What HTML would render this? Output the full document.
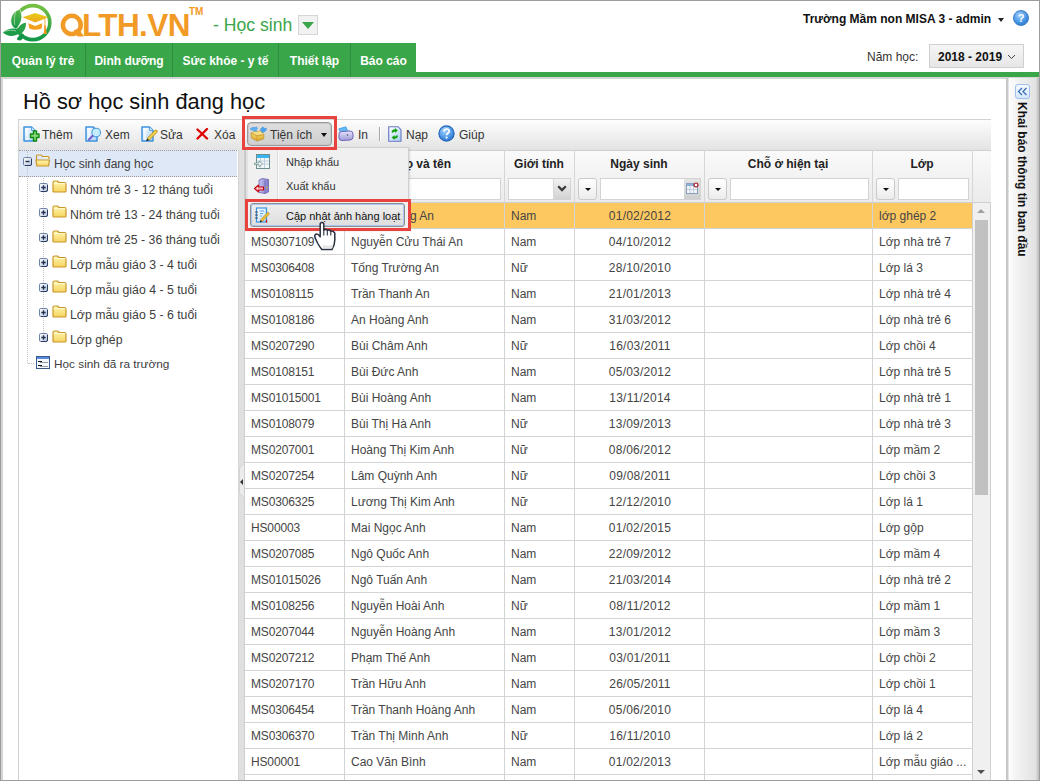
<!DOCTYPE html>
<html><head><meta charset="utf-8">
<style>
*{box-sizing:border-box;margin:0;padding:0}
html,body{width:1040px;height:781px;overflow:hidden;background:#fff}
body{position:relative;font-family:"Liberation Sans",sans-serif;color:#222}
.a{position:absolute;white-space:nowrap}
#frame{position:absolute;left:0;top:0;width:1040px;height:781px;border:1px solid #9c9c9c;z-index:50;pointer-events:none}
/* header */
#logo-t{left:82px;top:7px;font-size:31.5px;font-weight:bold;color:#f29a26;line-height:36px;letter-spacing:-0.6px}
#tm{left:189px;top:7px;font-size:10px;font-weight:bold;color:#f29a26;line-height:10px}
#mod{left:213px;top:13px;font-size:17.6px;color:#3aa64a;line-height:24px}
#moddd{left:298px;top:15px;width:20px;height:20px;border:1px solid #d6d6d6;background:#f2f2f2}
#moddd:after{content:"";position:absolute;left:3px;top:6px;border-left:6px solid transparent;border-right:6px solid transparent;border-top:7px solid #3aa64a}
#user{left:803px;top:11px;font-size:12px;font-weight:bold;color:#111;line-height:16px}
#usertri{left:998px;top:18px;border-left:3.5px solid transparent;border-right:3.5px solid transparent;border-top:4px solid #222}
#help{left:1013px;top:10px;width:16px;height:16px;border-radius:50%;background:radial-gradient(circle at 40% 30%,#9fd0ff,#3f8fe0 60%,#2a6fc4);border:1px solid #3a7bc8;color:#fff;font-size:11px;font-weight:bold;text-align:center;line-height:14px}
#nav{left:1px;top:43px;height:29px;background:#3aa64a}
.tab{position:absolute;top:43px;height:34px;background:#3aa64a;color:#fff;font-weight:bold;font-size:12px;line-height:30px;padding-top:3px;text-align:center;border-right:1px solid #2f8d3d}
#gbar{left:1px;top:72px;width:1038px;height:5px;background:#3aa64a}
#gline{left:1px;top:77px;width:1038px;height:2px;background:#d4d4d4}
#ny{left:867px;top:49px;font-size:12px;color:#333;line-height:16px}
#nybox{left:929px;top:44px;width:95px;height:24px;border:1px solid #cfcfcf;background:linear-gradient(#f6f6f6,#e6e6e6)}
#nyt{left:938px;top:49px;font-size:12px;font-weight:bold;color:#111;line-height:16px}
/* title */
#title{left:23px;top:89px;font-size:21.8px;color:#111;line-height:26px}

/* toolbar */
#tb{left:18px;top:119px;width:973px;height:31px;border-top:1px solid #d2d2d2;border-left:1px solid #d2d2d2;background:linear-gradient(#fdfdfd,#e3e3e3)}
.tbt{position:absolute;top:127px;font-size:12px;color:#333;line-height:16px;white-space:nowrap}
.ico{position:absolute}
/* tree */
#tree{left:18px;top:150px;width:220px;height:631px;border-left:1px solid #d2d2d2;background:#fff}
.tn{position:absolute;font-size:12px;color:#404040;line-height:16px;white-space:nowrap}
#split{left:238px;top:150px;width:7px;height:631px;background:#e0e0e0;border-left:1px solid #d6d6d6;border-right:1px solid #c8c8c8}
/* grid */
#gh{left:245px;top:150px;width:746px;height:53px;border-top:1px solid #d0d0d0;border-bottom:1px solid #d0d0d0;background:linear-gradient(#fafafa,#ebebeb)}
.hc{position:absolute;top:150px;height:53px;border-right:1px solid #d3d3d3}
.ht{position:absolute;top:156px;font-size:12px;font-weight:bold;color:#222;line-height:16px;text-align:center;white-space:nowrap}
.inp{position:absolute;top:178px;height:22px;background:#fff;border:1px solid #d3d3d3}
.ddb{position:absolute;top:178px;width:19px;height:22px;border:1px solid #c9c9c9;border-radius:3px;background:linear-gradient(#fff,#ececec)}
.ddb:after{content:"";position:absolute;left:6px;top:9px;border-left:3px solid transparent;border-right:3px solid transparent;border-top:3.5px solid #111}
.row{position:absolute;left:245px;width:727px;height:26px;border-bottom:1px solid #d4d4d4;font-size:12px;color:#454545;line-height:25px;padding-top:1px}
.row div{position:absolute;top:1px;white-space:nowrap}
.row.sel{background:#fdc85f}
.vl{position:absolute;top:203px;width:1px;height:578px;background:#d4d4d4}
#gleft{left:244px;top:150px;width:1px;height:631px;background:#cfcfcf}
</style></head>
<body>
<div id="frame"></div>
<div class="a" style="left:1px;top:77px;width:2px;height:703px;background:#d4d4d4;z-index:49"></div>

<!-- logo -->
<svg class="a" style="left:0px;top:0px" width="56" height="44" viewBox="0 0 56 44">
  <defs>
    <linearGradient id="lg1" x1="0" y1="0" x2="0" y2="1"><stop offset="0" stop-color="#74c043"/><stop offset="1" stop-color="#11984a"/></linearGradient>
    <linearGradient id="lf" x1="0" y1="0" x2="0" y2="1"><stop offset="0" stop-color="#5ab748"/><stop offset="1" stop-color="#129647"/></linearGradient>
    <linearGradient id="cap" x1="0" y1="0" x2="0" y2="1"><stop offset="0" stop-color="#e6cf16"/><stop offset="1" stop-color="#f1a51c"/></linearGradient>
  </defs>
  <circle cx="32.8" cy="22.6" r="17" fill="none" stroke="url(#lg1)" stroke-width="3.6"/>
  <path d="M19.4 9.3 C12.3 11.5 9.4 19 11.4 24.3 C12.4 26.9 14.4 28.4 16 29.3 C19.9 25 22.4 20 21.7 15 C21.4 12.4 20.6 10.6 19.4 9.3 Z" fill="url(#lf)" stroke="#fff" stroke-width="0.8"/><path d="M15.5 12.5 C14.2 16 14 21 14.8 25" fill="none" stroke="#d8f0d0" stroke-width="0.6"/>
  <path d="M3 32.4 C7 28.5 13 27.8 17 29 C19 29.8 20 31 20.5 32.5 C17 35.5 11 37 7 35 C5 34.2 4 33.3 3 32.4 Z" fill="#1c9b49"/><path d="M5 31.3 C9 30 13 30 16 31" fill="none" stroke="#d8f0d0" stroke-width="0.6"/>
  <path d="M18 29.5 C18.5 26 21.5 23.5 26 22.8 C26.3 27 24.5 31 21.5 33.5 C20 32.5 18.5 31 18 29.5 Z" fill="#2aa04a"/>
  <path d="M16.8 39.5 C17.5 36.5 20 34.5 23.5 34 C24 36.5 23 39 20.5 40.5 C19 40.5 17.8 40.2 16.8 39.5 Z" fill="#12954a"/>
  <path d="M22.5 17.2 L35.2 12.9 L48.5 17.2 L35.2 22.6 Z" fill="url(#cap)"/>
  <path d="M28.4 23.2 L35.2 26 L42.3 23.2 L41.6 28.6 C37.5 30.2 33 30.2 29.2 28.6 Z" fill="#f3a01d"/>
  <path d="M44.8 18.3 L45 27" stroke="#f0a82a" stroke-width="0.9"/><circle cx="45" cy="26.2" r="1" fill="#f0a020"/>
  <path d="M44.3 26.5 L45.7 26.5 L46.8 34 L43.8 34 Z" fill="#f39a1e"/>
</svg>
<svg class="a" style="left:56px;top:10px" width="32" height="30" viewBox="56 10 32 30"><ellipse cx="71.8" cy="24.9" rx="8.9" ry="9.1" fill="none" stroke="#f29a26" stroke-width="4.5"/><path d="M73.5 30.5 L78.5 28.5 L84 36.4 L77.5 36.4 Z" fill="#f29a26"/></svg>
<div class="a" id="logo-t">LTH.VN</div>
<div class="a" id="tm">TM</div>
<div class="a" id="mod">- Học sinh</div>
<div class="a" id="moddd"></div>

<div class="a" id="user">Trường Mầm non MISA 3 - admin</div>
<div class="a" id="usertri"></div>
<div class="a" id="help">?</div>

<div class="a" id="gbar"></div>
<div class="a" id="gline"></div>
<div class="tab" style="left:1px;width:85px">Quản lý trẻ</div>
<div class="tab" style="left:86px;width:87px">Dinh dưỡng</div>
<div class="tab" style="left:173px;width:106px">Sức khỏe - y tế</div>
<div class="tab" style="left:279px;width:72px">Thiết lập</div>
<div class="tab" style="left:351px;width:65px;border-right:0">Báo cáo</div>

<div class="a" id="ny">Năm học:</div>
<div class="a" id="nybox"></div>
<div class="a" id="nyt">2018 - 2019</div>
<svg class="a" style="left:1007px;top:54px" width="9" height="6"><path d="M1 1 L4.5 4.5 L8 1" fill="none" stroke="#444" stroke-width="1"/></svg>

<div class="a" id="title">Hồ sơ học sinh đang học</div>


<!-- TOOLBAR -->
<div class="a" id="tb"></div>
<!--TBITEMS-->
<svg width="0" height="0" style="position:absolute"><defs><linearGradient id="dg" x1="0" y1="0" x2="1" y2="1"><stop offset="0" stop-color="#ffffff"/><stop offset="1" stop-color="#a9d2f6"/></linearGradient><linearGradient id="tbox" x1="0" y1="0" x2="0" y2="1"><stop offset="0" stop-color="#f7dc6a"/><stop offset="1" stop-color="#d9a22a"/></linearGradient><linearGradient id="prn" x1="0" y1="0" x2="0" y2="1"><stop offset="0" stop-color="#e6e3ff"/><stop offset="1" stop-color="#9f9ad8"/></linearGradient><radialGradient id="hlp" cx="0.4" cy="0.3" r="0.8"><stop offset="0" stop-color="#a8d6ff"/><stop offset="0.6" stop-color="#4a97e6"/><stop offset="1" stop-color="#2a6ec8"/></radialGradient></defs></svg>
<svg class="ico" style="left:23px;top:126px" width="17" height="16" viewBox="0 0 17 16"><path d="M1 1 H8.5 L12 4.5 V15 H1 Z" fill="url(#dg)" stroke="#3d94e0" stroke-width="1.5" stroke-linejoin="round"/><path d="M2.8 2.8 H6 M4 2.8 V13.2 M2.8 13.2 H6" stroke="#ffffff" stroke-width="1.1" opacity="0.9"/><path d="M8.5 1 V4.5 H12" fill="#cfe6fb" stroke="#3d94e0" stroke-width="0.8"/><path d="M8 7.5 H11 V4.5 H14 V7.5 H16.5 V11 H14 V14.5 H11 V11 H8 Z" transform="translate(-0.5,0.5)" fill="#86d877" stroke="#128a12" stroke-width="1.4" stroke-linejoin="round"/></svg>
<div class="tbt" style="left:42px">Thêm</div>
<svg class="ico" style="left:85px;top:126px" width="17" height="16" viewBox="0 0 17 16"><path d="M1 1 H8.5 L12 4.5 V15 H1 Z" fill="url(#dg)" stroke="#3d94e0" stroke-width="1.5" stroke-linejoin="round"/><path d="M2.8 2.8 H6 M4 2.8 V13.2 M2.8 13.2 H6" stroke="#ffffff" stroke-width="1.1" opacity="0.9"/><path d="M8.5 1 V4.5 H12" fill="#cfe6fb" stroke="#3d94e0" stroke-width="0.8"/><circle cx="11.2" cy="6.5" r="4.3" fill="#c5ecff" stroke="#4b9fe0" stroke-width="1.1"/><path d="M4 13.5 L7.5 10" stroke="#7a5cd0" stroke-width="2.2" stroke-linecap="round"/></svg>
<div class="tbt" style="left:105px">Xem</div>
<svg class="ico" style="left:141px;top:126px" width="17" height="16" viewBox="0 0 17 16"><path d="M1 1 H8.5 L12 4.5 V15 H1 Z" fill="url(#dg)" stroke="#3d94e0" stroke-width="1.5" stroke-linejoin="round"/><path d="M2.8 2.8 H6 M4 2.8 V13.2 M2.8 13.2 H6" stroke="#ffffff" stroke-width="1.1" opacity="0.9"/><path d="M8.5 1 V4.5 H12" fill="#cfe6fb" stroke="#3d94e0" stroke-width="0.8"/><path d="M6.2 12.2 L13.8 4.6 Q15 3.6 16 4.6 Q16.8 5.6 15.8 6.6 L8.2 14.2 Z" fill="#ecc53c" stroke="#b88a10" stroke-width="0.8"/><path d="M7.2 13.2 L14.8 5.6" stroke="#fbe890" stroke-width="0.7"/><path d="M6.2 12.2 L5 15.3 L8.2 14.2 Z" fill="#2a2a2a"/></svg>
<div class="tbt" style="left:160px">Sửa</div>
<svg class="ico" style="left:196px;top:128px" width="13" height="12" viewBox="0 0 13 12"><path d="M1.5 1.5 L11 10.5 M11 1 L1.5 10.5" stroke="#e00000" stroke-width="2.3" stroke-linecap="round"/></svg>
<div class="tbt" style="left:214px">Xóa</div>
<div class="a" style="left:247px;top:122px;width:85px;height:24px;border:1px solid #9a9a9a;border-radius:4px;background:linear-gradient(#dedede,#cfcfcf);box-shadow:inset 0 0 0 1px #c8c8c8"></div>
<svg class="ico" style="left:250px;top:126px" width="17" height="16" viewBox="0 0 17 16"><path d="M0 3 Q2 0.8 5 1.5 L6.5 0.8 L7.5 3 L6 4 L7.5 7 L5 7.5 L3.5 4.5 Q1.5 4 0 3 Z" fill="#5cb0f2" stroke="#3f95e0" stroke-width="0.5"/><path d="M10.5 3 L13 0.8 L14.5 2.5 L16.5 2 L16 4.5 L13.5 6.5 L11 6 Z" fill="#4aa2ee" stroke="#3f95e0" stroke-width="0.5"/><path d="M1 7 L7 9.5 L13.8 8.5 V12.8 L7.2 15 L1.5 12 Z" fill="url(#tbox)" stroke="#c08a20" stroke-width="0.7" stroke-linejoin="round"/><path d="M1 7 L5 5.5 L8 6 Q9 4 10.5 5 L13.8 8.5 L7 9.5 Z" fill="#f6e08a" stroke="#c89a2a" stroke-width="0.6"/><path d="M7 9.5 V15" stroke="#c89a2a" stroke-width="0.6"/></svg>
<div class="tbt" style="left:270px">Tiện ích</div>
<div class="a" style="left:321px;top:133px;border-left:3.5px solid transparent;border-right:3.5px solid transparent;border-top:4px solid #111"></div>
<svg class="ico" style="left:338px;top:126px" width="16" height="16" viewBox="0 0 16 16"><path d="M0.8 2.8 L7.8 0.8 L10 5.5 L3 7.2 Z" fill="#62baf4" stroke="#3a92de" stroke-width="0.7"/><path d="M1 8 Q1 5.5 4 5.5 L12 5 Q15 5 15 8 V11.5 Q15 13.5 12 14 L4 14.5 Q1 14.5 1 12 Z" fill="url(#prn)" stroke="#6e68b8" stroke-width="1"/><circle cx="9.5" cy="9" r="0.8" fill="#555"/></svg>
<div class="tbt" style="left:358px">In</div>
<div class="a" style="left:379px;top:127px;width:1px;height:14px;background:#a8a8a0"></div>
<div class="a" style="left:380px;top:127px;width:1px;height:14px;background:#fff"></div>
<svg class="ico" style="left:388px;top:126px" width="14" height="16" viewBox="0 0 14 16"><path d="M0.7 0.7 H10 L13 3.7 V15.3 H0.7 Z" fill="url(#dg)" stroke="#6a76c0" stroke-width="1.1"/><path d="M3.5 6 Q4 3.3 7 3.3 L7 2 L9.8 4.5 L7 7 L7 5.5 Q5.2 5.5 4.8 7 Z" fill="#11a011"/><path d="M10 10 Q9.5 12.7 6.5 12.7 L6.5 14 L3.7 11.5 L6.5 9 L6.5 10.5 Q8.3 10.5 8.7 9 Z" fill="#11a011"/></svg>
<div class="tbt" style="left:406px">Nạp</div>
<svg class="ico" style="left:438px;top:125px" width="17" height="17" viewBox="0 0 17 17"><circle cx="8.5" cy="8.5" r="7.6" fill="url(#hlp)" stroke="#1f63b8" stroke-width="1.1"/><path d="M6 6.5 Q6 4 8.6 4 Q11.2 4 11.2 6.3 Q11.2 7.8 9.4 8.6 Q8.6 9 8.6 10.2" fill="none" stroke="#fff" stroke-width="1.7"/><circle cx="8.6" cy="12.6" r="1.1" fill="#fff"/></svg>
<div class="tbt" style="left:459px">Giúp</div>
<!--/TBITEMS-->
<!-- TREE -->
<div class="a" id="tree"></div>
<!--TREEITEMS-->
<svg width="0" height="0" style="position:absolute"><defs><linearGradient id="fold" x1="0" y1="0" x2="0" y2="1"><stop offset="0" stop-color="#fff7b0"/><stop offset="1" stop-color="#f6d35e"/></linearGradient><linearGradient id="pbox" x1="0" y1="0" x2="1" y2="1"><stop offset="0" stop-color="#ffffff"/><stop offset="1" stop-color="#b9c6de"/></linearGradient></defs></svg>
<div class="a" style="left:19px;top:150px;width:218px;height:27px;background:#dfe8f6;border-top:1px dotted #9a9a9a;border-bottom:1px dotted #9a9a9a"></div>
<div class="a" style="left:27px;top:167px;width:1px;height:196px;border-left:1px dotted #c4c4c4"></div>
<div class="a" style="left:28px;top:363px;width:6px;height:1px;border-top:1px dotted #c4c4c4"></div>
<div class="a" style="left:27px;top:151px;width:1px;height:6px;border-left:1px dotted #c4c4c4"></div>
<div class="a" style="left:43px;top:178px;width:1px;height:155px;border-left:1px dotted #c4c4c4"></div>
<svg class="ico" style="left:23px;top:157px" width="9" height="9" viewBox="0 0 9 9"><rect x="0.5" y="0.5" width="8" height="8" rx="1.2" fill="url(#pbox)" stroke="#6f83a6" stroke-width="1"/><path d="M8.5 2 V7 Q8.5 8.5 7 8.5 H2" fill="none" stroke="#2c3f60" stroke-width="1"/><path d="M2.5 4.5 H6.5" stroke="#1e3050" stroke-width="1.4"/></svg>
<svg class="ico" style="left:35px;top:154px" width="16" height="13" viewBox="0 0 16 13"><path d="M2.5 1 H6 L7.5 2.5 H13 Q14 2.5 14 3.5 V5" fill="#fff8c0" stroke="#c9962a" stroke-width="1.2"/><path d="M2.5 1 Q1.5 1 1.5 2 V11" fill="none" stroke="#c9962a" stroke-width="1.2"/><path d="M1 6 H14.5 L13.5 12 H2 Z" fill="url(#fold)" stroke="#c9962a" stroke-width="1.2" stroke-linejoin="round"/></svg>
<div class="tn" style="left:54px;top:156px;font-size:12px">Học sinh đang học</div>
<svg class="ico" style="left:39px;top:183px" width="9" height="9" viewBox="0 0 9 9"><rect x="0.5" y="0.5" width="8" height="8" rx="1.2" fill="url(#pbox)" stroke="#6f83a6" stroke-width="1"/><path d="M8.5 2 V7 Q8.5 8.5 7 8.5 H2" fill="none" stroke="#2c3f60" stroke-width="1"/><path d="M2.3 4.5 H6.7 M4.5 2.3 V6.7" stroke="#1e3050" stroke-width="1.3"/></svg>
<svg class="ico" style="left:52px;top:180px" width="15" height="13" viewBox="0 0 15 13"><path d="M1 2.5 Q1 1 2.5 1 H5.5 L7 2.5 H12.5 Q14 2.5 14 4 V11 Q14 12 13 12 H2 Q1 12 1 11 Z" fill="url(#fold)" stroke="#c9962a" stroke-width="1.2" stroke-linejoin="round"/><path d="M1.6 3.6 H13.4" stroke="#fffbe0" stroke-width="0.8"/></svg>
<div class="tn" style="left:70px;top:182px;font-size:12.3px">Nhóm trẻ 3 - 12 tháng tuổi</div>
<svg class="ico" style="left:39px;top:208px" width="9" height="9" viewBox="0 0 9 9"><rect x="0.5" y="0.5" width="8" height="8" rx="1.2" fill="url(#pbox)" stroke="#6f83a6" stroke-width="1"/><path d="M8.5 2 V7 Q8.5 8.5 7 8.5 H2" fill="none" stroke="#2c3f60" stroke-width="1"/><path d="M2.3 4.5 H6.7 M4.5 2.3 V6.7" stroke="#1e3050" stroke-width="1.3"/></svg>
<svg class="ico" style="left:52px;top:205px" width="15" height="13" viewBox="0 0 15 13"><path d="M1 2.5 Q1 1 2.5 1 H5.5 L7 2.5 H12.5 Q14 2.5 14 4 V11 Q14 12 13 12 H2 Q1 12 1 11 Z" fill="url(#fold)" stroke="#c9962a" stroke-width="1.2" stroke-linejoin="round"/><path d="M1.6 3.6 H13.4" stroke="#fffbe0" stroke-width="0.8"/></svg>
<div class="tn" style="left:70px;top:207px;font-size:12.3px">Nhóm trẻ 13 - 24 tháng tuổi</div>
<svg class="ico" style="left:39px;top:233px" width="9" height="9" viewBox="0 0 9 9"><rect x="0.5" y="0.5" width="8" height="8" rx="1.2" fill="url(#pbox)" stroke="#6f83a6" stroke-width="1"/><path d="M8.5 2 V7 Q8.5 8.5 7 8.5 H2" fill="none" stroke="#2c3f60" stroke-width="1"/><path d="M2.3 4.5 H6.7 M4.5 2.3 V6.7" stroke="#1e3050" stroke-width="1.3"/></svg>
<svg class="ico" style="left:52px;top:230px" width="15" height="13" viewBox="0 0 15 13"><path d="M1 2.5 Q1 1 2.5 1 H5.5 L7 2.5 H12.5 Q14 2.5 14 4 V11 Q14 12 13 12 H2 Q1 12 1 11 Z" fill="url(#fold)" stroke="#c9962a" stroke-width="1.2" stroke-linejoin="round"/><path d="M1.6 3.6 H13.4" stroke="#fffbe0" stroke-width="0.8"/></svg>
<div class="tn" style="left:70px;top:232px;font-size:12.3px">Nhóm trẻ 25 - 36 tháng tuổi</div>
<svg class="ico" style="left:39px;top:258px" width="9" height="9" viewBox="0 0 9 9"><rect x="0.5" y="0.5" width="8" height="8" rx="1.2" fill="url(#pbox)" stroke="#6f83a6" stroke-width="1"/><path d="M8.5 2 V7 Q8.5 8.5 7 8.5 H2" fill="none" stroke="#2c3f60" stroke-width="1"/><path d="M2.3 4.5 H6.7 M4.5 2.3 V6.7" stroke="#1e3050" stroke-width="1.3"/></svg>
<svg class="ico" style="left:52px;top:255px" width="15" height="13" viewBox="0 0 15 13"><path d="M1 2.5 Q1 1 2.5 1 H5.5 L7 2.5 H12.5 Q14 2.5 14 4 V11 Q14 12 13 12 H2 Q1 12 1 11 Z" fill="url(#fold)" stroke="#c9962a" stroke-width="1.2" stroke-linejoin="round"/><path d="M1.6 3.6 H13.4" stroke="#fffbe0" stroke-width="0.8"/></svg>
<div class="tn" style="left:70px;top:257px;font-size:12.3px">Lớp mẫu giáo 3 - 4 tuổi</div>
<svg class="ico" style="left:39px;top:283px" width="9" height="9" viewBox="0 0 9 9"><rect x="0.5" y="0.5" width="8" height="8" rx="1.2" fill="url(#pbox)" stroke="#6f83a6" stroke-width="1"/><path d="M8.5 2 V7 Q8.5 8.5 7 8.5 H2" fill="none" stroke="#2c3f60" stroke-width="1"/><path d="M2.3 4.5 H6.7 M4.5 2.3 V6.7" stroke="#1e3050" stroke-width="1.3"/></svg>
<svg class="ico" style="left:52px;top:280px" width="15" height="13" viewBox="0 0 15 13"><path d="M1 2.5 Q1 1 2.5 1 H5.5 L7 2.5 H12.5 Q14 2.5 14 4 V11 Q14 12 13 12 H2 Q1 12 1 11 Z" fill="url(#fold)" stroke="#c9962a" stroke-width="1.2" stroke-linejoin="round"/><path d="M1.6 3.6 H13.4" stroke="#fffbe0" stroke-width="0.8"/></svg>
<div class="tn" style="left:70px;top:282px;font-size:12.3px">Lớp mẫu giáo 4 - 5 tuổi</div>
<svg class="ico" style="left:39px;top:308px" width="9" height="9" viewBox="0 0 9 9"><rect x="0.5" y="0.5" width="8" height="8" rx="1.2" fill="url(#pbox)" stroke="#6f83a6" stroke-width="1"/><path d="M8.5 2 V7 Q8.5 8.5 7 8.5 H2" fill="none" stroke="#2c3f60" stroke-width="1"/><path d="M2.3 4.5 H6.7 M4.5 2.3 V6.7" stroke="#1e3050" stroke-width="1.3"/></svg>
<svg class="ico" style="left:52px;top:305px" width="15" height="13" viewBox="0 0 15 13"><path d="M1 2.5 Q1 1 2.5 1 H5.5 L7 2.5 H12.5 Q14 2.5 14 4 V11 Q14 12 13 12 H2 Q1 12 1 11 Z" fill="url(#fold)" stroke="#c9962a" stroke-width="1.2" stroke-linejoin="round"/><path d="M1.6 3.6 H13.4" stroke="#fffbe0" stroke-width="0.8"/></svg>
<div class="tn" style="left:70px;top:307px;font-size:12.3px">Lớp mẫu giáo 5 - 6 tuổi</div>
<svg class="ico" style="left:39px;top:333px" width="9" height="9" viewBox="0 0 9 9"><rect x="0.5" y="0.5" width="8" height="8" rx="1.2" fill="url(#pbox)" stroke="#6f83a6" stroke-width="1"/><path d="M8.5 2 V7 Q8.5 8.5 7 8.5 H2" fill="none" stroke="#2c3f60" stroke-width="1"/><path d="M2.3 4.5 H6.7 M4.5 2.3 V6.7" stroke="#1e3050" stroke-width="1.3"/></svg>
<svg class="ico" style="left:52px;top:330px" width="15" height="13" viewBox="0 0 15 13"><path d="M1 2.5 Q1 1 2.5 1 H5.5 L7 2.5 H12.5 Q14 2.5 14 4 V11 Q14 12 13 12 H2 Q1 12 1 11 Z" fill="url(#fold)" stroke="#c9962a" stroke-width="1.2" stroke-linejoin="round"/><path d="M1.6 3.6 H13.4" stroke="#fffbe0" stroke-width="0.8"/></svg>
<div class="tn" style="left:70px;top:332px;font-size:12.3px">Lớp ghép</div>
<svg class="ico" style="left:36px;top:356px" width="14" height="13" viewBox="0 0 14 13"><rect x="0.5" y="0.5" width="13" height="12" fill="#f4f8ff" stroke="#3a5a8a" stroke-width="1"/><rect x="1" y="1" width="12" height="2" fill="#5a8ae0"/><path d="M2 5.5 H6 M2 9.5 H6" stroke="#111" stroke-width="1"/><path d="M4 6.5 H12 M4 10.5 H12" stroke="#999" stroke-width="1"/></svg>
<div class="tn" style="left:54px;top:356px;font-size:11.8px">Học sinh đã ra trường</div>
<!--/TREEITEMS-->
<div class="a" id="split"></div>
<svg class="a" style="left:238px;top:463px" width="7" height="35" viewBox="0 0 7 35"><path d="M6 0.5 L1.5 5 V30 L6 34.5" fill="#ebebeb" stroke="#d0d0d0" stroke-width="0.8"/><path d="M5 16 L2 19 L5 22 Z" fill="#333"/></svg>
<!-- GRID -->
<!--GRID-->
<div class="a" id="gh"></div>
<div class="a" style="left:344px;top:151px;width:1px;height:51px;background:#d6d6d6"></div>
<div class="a" style="left:504px;top:151px;width:1px;height:51px;background:#d6d6d6"></div>
<div class="a" style="left:574px;top:151px;width:1px;height:51px;background:#d6d6d6"></div>
<div class="a" style="left:704px;top:151px;width:1px;height:51px;background:#d6d6d6"></div>
<div class="a" style="left:872px;top:151px;width:1px;height:51px;background:#d6d6d6"></div>
<div class="a" style="left:972px;top:151px;width:1px;height:51px;background:#d6d6d6"></div>
<div class="ht" style="left:245px;width:99px">Mã học sinh</div>
<div class="ht" style="left:344px;width:160px">Họ và tên</div>
<div class="ht" style="left:504px;width:70px">Giới tính</div>
<div class="ht" style="left:574px;width:130px">Ngày sinh</div>
<div class="ht" style="left:704px;width:168px">Chỗ ở hiện tại</div>
<div class="ht" style="left:872px;width:100px">Lớp</div>
<div class="inp" style="left:249px;width:91px"></div>
<div class="inp" style="left:349px;width:152px"></div>
<div class="inp" style="left:508px;width:63px"></div>
<div class="a" style="left:553px;top:179px;width:17px;height:20px;background:linear-gradient(#f2f2f2,#d2d2d2);border-left:1px solid #d8d8d8"></div>
<svg class="a" style="left:557px;top:185px" width="10" height="7"><path d="M1.2 1.2 L5 5 L8.8 1.2" fill="none" stroke="#3a3a3a" stroke-width="2.3"/></svg>
<div class="ddb" style="left:578px"></div>
<div class="inp" style="left:600px;width:101px"></div>
<div class="a" style="left:684px;top:179px;width:16px;height:20px;background:linear-gradient(#e4e4e4,#cfcfcf)"></div>
<svg class="a" style="left:686px;top:182px" width="13" height="12"><rect x="0.5" y="1.5" width="11" height="10" fill="#f4f6fa" stroke="#8aa0c0"/><rect x="1" y="2" width="10" height="2" fill="#8fb0d8"/><path d="M4 4 V11 M7.5 4 V11 M1 7.5 H11" stroke="#c0ccdc" stroke-width="1"/><circle cx="10" cy="3" r="2" fill="#fff" stroke="#a01018" stroke-width="1.2"/></svg>
<div class="ddb" style="left:708px"></div>
<div class="inp" style="left:730px;width:139px"></div>
<div class="ddb" style="left:876px"></div>
<div class="inp" style="left:898px;width:71px"></div>
<div class="row sel" style="top:203px"><div style="left:6px;letter-spacing:-0.15px">MS0307109</div><div style="left:106px">Trịnh Hoàng An</div><div style="left:266px">Nam</div><div style="left:330px;width:130px;text-align:center;letter-spacing:0.22px">01/02/2012</div><div style="left:634px">lớp ghép 2</div></div>
<div class="row" style="top:229px"><div style="left:6px;letter-spacing:-0.15px">MS0307109</div><div style="left:106px">Nguyễn Cửu Thái An</div><div style="left:266px">Nam</div><div style="left:330px;width:130px;text-align:center;letter-spacing:0.22px">04/10/2012</div><div style="left:634px">Lớp nhà trẻ 7</div></div>
<div class="row" style="top:255px"><div style="left:6px;letter-spacing:-0.15px">MS0306408</div><div style="left:106px">Tống Trường An</div><div style="left:266px">Nữ</div><div style="left:330px;width:130px;text-align:center;letter-spacing:0.22px">28/10/2010</div><div style="left:634px">Lớp lá 3</div></div>
<div class="row" style="top:281px"><div style="left:6px;letter-spacing:-0.15px">MS0108115</div><div style="left:106px">Trần Thanh An</div><div style="left:266px">Nam</div><div style="left:330px;width:130px;text-align:center;letter-spacing:0.22px">21/01/2013</div><div style="left:634px">Lớp nhà trẻ 4</div></div>
<div class="row" style="top:307px"><div style="left:6px;letter-spacing:-0.15px">MS0108186</div><div style="left:106px">An Hoàng Anh</div><div style="left:266px">Nam</div><div style="left:330px;width:130px;text-align:center;letter-spacing:0.22px">31/03/2012</div><div style="left:634px">Lớp nhà trẻ 6</div></div>
<div class="row" style="top:333px"><div style="left:6px;letter-spacing:-0.15px">MS0207290</div><div style="left:106px">Bùi Châm Anh</div><div style="left:266px">Nữ</div><div style="left:330px;width:130px;text-align:center;letter-spacing:0.22px">16/03/2011</div><div style="left:634px">Lớp chồi 4</div></div>
<div class="row" style="top:359px"><div style="left:6px;letter-spacing:-0.15px">MS0108151</div><div style="left:106px">Bùi Đức Anh</div><div style="left:266px">Nam</div><div style="left:330px;width:130px;text-align:center;letter-spacing:0.22px">05/03/2012</div><div style="left:634px">Lớp nhà trẻ 5</div></div>
<div class="row" style="top:385px"><div style="left:6px;letter-spacing:-0.15px">MS01015001</div><div style="left:106px">Bùi Hoàng Anh</div><div style="left:266px">Nam</div><div style="left:330px;width:130px;text-align:center;letter-spacing:0.22px">13/11/2014</div><div style="left:634px">Lớp nhà trẻ 1</div></div>
<div class="row" style="top:411px"><div style="left:6px;letter-spacing:-0.15px">MS0108079</div><div style="left:106px">Bùi Thị Hà Anh</div><div style="left:266px">Nữ</div><div style="left:330px;width:130px;text-align:center;letter-spacing:0.22px">13/09/2013</div><div style="left:634px">Lớp nhà trẻ 3</div></div>
<div class="row" style="top:437px"><div style="left:6px;letter-spacing:-0.15px">MS0207001</div><div style="left:106px">Hoàng Thị Kim Anh</div><div style="left:266px">Nữ</div><div style="left:330px;width:130px;text-align:center;letter-spacing:0.22px">08/06/2012</div><div style="left:634px">Lớp mầm 2</div></div>
<div class="row" style="top:463px"><div style="left:6px;letter-spacing:-0.15px">MS0207254</div><div style="left:106px">Lâm Quỳnh Anh</div><div style="left:266px">Nữ</div><div style="left:330px;width:130px;text-align:center;letter-spacing:0.22px">09/08/2011</div><div style="left:634px">Lớp chồi 3</div></div>
<div class="row" style="top:489px"><div style="left:6px;letter-spacing:-0.15px">MS0306325</div><div style="left:106px">Lương Thị Kim Anh</div><div style="left:266px">Nữ</div><div style="left:330px;width:130px;text-align:center;letter-spacing:0.22px">12/12/2010</div><div style="left:634px">Lớp lá 1</div></div>
<div class="row" style="top:515px"><div style="left:6px;letter-spacing:-0.15px">HS00003</div><div style="left:106px">Mai Ngọc Anh</div><div style="left:266px">Nam</div><div style="left:330px;width:130px;text-align:center;letter-spacing:0.22px">01/02/2015</div><div style="left:634px">Lớp gộp</div></div>
<div class="row" style="top:541px"><div style="left:6px;letter-spacing:-0.15px">MS0207085</div><div style="left:106px">Ngô Quốc Anh</div><div style="left:266px">Nam</div><div style="left:330px;width:130px;text-align:center;letter-spacing:0.22px">22/09/2012</div><div style="left:634px">Lớp mầm 4</div></div>
<div class="row" style="top:567px"><div style="left:6px;letter-spacing:-0.15px">MS01015026</div><div style="left:106px">Ngô Tuấn Anh</div><div style="left:266px">Nam</div><div style="left:330px;width:130px;text-align:center;letter-spacing:0.22px">21/03/2014</div><div style="left:634px">Lớp nhà trẻ 2</div></div>
<div class="row" style="top:593px"><div style="left:6px;letter-spacing:-0.15px">MS0108256</div><div style="left:106px">Nguyễn Hoài Anh</div><div style="left:266px">Nữ</div><div style="left:330px;width:130px;text-align:center;letter-spacing:0.22px">08/11/2012</div><div style="left:634px">Lớp mầm 1</div></div>
<div class="row" style="top:619px"><div style="left:6px;letter-spacing:-0.15px">MS0207044</div><div style="left:106px">Nguyễn Hoàng Anh</div><div style="left:266px">Nam</div><div style="left:330px;width:130px;text-align:center;letter-spacing:0.22px">13/01/2012</div><div style="left:634px">Lớp mầm 3</div></div>
<div class="row" style="top:645px"><div style="left:6px;letter-spacing:-0.15px">MS0207212</div><div style="left:106px">Phạm Thế Anh</div><div style="left:266px">Nam</div><div style="left:330px;width:130px;text-align:center;letter-spacing:0.22px">03/01/2011</div><div style="left:634px">Lớp chồi 2</div></div>
<div class="row" style="top:671px"><div style="left:6px;letter-spacing:-0.15px">MS0207170</div><div style="left:106px">Trần Hữu Anh</div><div style="left:266px">Nam</div><div style="left:330px;width:130px;text-align:center;letter-spacing:0.22px">26/05/2011</div><div style="left:634px">Lớp chồi 1</div></div>
<div class="row" style="top:697px"><div style="left:6px;letter-spacing:-0.15px">MS0306454</div><div style="left:106px">Trần Thanh Hoàng Anh</div><div style="left:266px">Nam</div><div style="left:330px;width:130px;text-align:center;letter-spacing:0.22px">05/06/2010</div><div style="left:634px">Lớp lá 4</div></div>
<div class="row" style="top:723px"><div style="left:6px;letter-spacing:-0.15px">MS0306370</div><div style="left:106px">Trần Thị Minh Anh</div><div style="left:266px">Nữ</div><div style="left:330px;width:130px;text-align:center;letter-spacing:0.22px">16/11/2010</div><div style="left:634px">Lớp lá 2</div></div>
<div class="row" style="top:749px"><div style="left:6px;letter-spacing:-0.15px">HS00001</div><div style="left:106px">Cao Văn Bình</div><div style="left:266px">Nam</div><div style="left:330px;width:130px;text-align:center;letter-spacing:0.22px">01/02/2013</div><div style="left:634px">Lớp mẫu giáo ...</div></div>
<div class="row" style="top:775px"><div style="left:6px;letter-spacing:-0.15px"></div><div style="left:106px"></div><div style="left:266px"></div><div style="left:330px;width:130px;text-align:center;letter-spacing:0.22px"></div><div style="left:634px"></div></div>
<div class="vl" style="left:344px"></div>
<div class="vl" style="left:504px"></div>
<div class="vl" style="left:574px"></div>
<div class="vl" style="left:704px"></div>
<div class="vl" style="left:872px"></div>
<div class="a" id="gleft"></div>
<div class="a" style="left:972px;top:203px;width:19px;height:578px;background:#f0f0f0;border-left:1px solid #d0d0d0;border-right:1px solid #d0d0d0"></div>
<div class="a" style="left:975px;top:220px;width:13px;height:275px;background:#c1c1c1"></div>
<div class="a" style="left:977px;top:209px;border-left:4px solid transparent;border-right:4px solid transparent;border-bottom:4px solid #a0a0a0"></div>
<div class="a" style="left:977px;top:770px;border-left:4px solid transparent;border-right:4px solid transparent;border-top:4px solid #505050"></div>
<!--/GRID-->
<!--MENU-->
<svg width="0" height="0" style="position:absolute"><defs><linearGradient id="srv" x1="0" y1="0" x2="1" y2="0"><stop offset="0" stop-color="#c8c4f4"/><stop offset="1" stop-color="#7f79c8"/></linearGradient><linearGradient id="note" x1="0" y1="0" x2="1" y2="1"><stop offset="0" stop-color="#ffffff"/><stop offset="1" stop-color="#b8dcfa"/></linearGradient></defs></svg>
<div class="a" style="left:245px;top:147px;width:164px;height:83px;background:#f0f0f0;border:1px solid #cfcfcf;border-left:1px solid #c4c4c4;box-shadow:1px 1px 2px rgba(0,0,0,0.12)"></div>
<div class="a" style="left:246px;top:148px;width:2px;height:81px;background:#e2e2e2"></div>
<div class="a" style="left:277px;top:148px;width:1px;height:81px;background:#dcdcdc"></div>
<div class="a" style="left:278px;top:148px;width:1px;height:81px;background:#fafafa"></div>
<svg class="ico" style="left:254px;top:154px" width="16" height="15" viewBox="0 0 16 15"><rect x="2.5" y="0.5" width="13" height="14" fill="#f2f8f8" stroke="#6f8f8f" stroke-width="1"/><rect x="3" y="1" width="12" height="3" fill="#38b4f0"/><path d="M6.5 4 V14 M10.5 4 V14 M3 7 H15 M3 10 H15" stroke="#b8ccd8" stroke-width="0.9"/><path d="M0.5 9 H5 V7 L8.5 9.8 L5 12.6 V10.6 H0.5 Z" fill="#ffffff" stroke="#7a9a9a" stroke-width="0.9"/></svg>
<div class="tn" style="left:286px;top:154px;font-size:11px;color:#333">Nhập khẩu</div>
<svg class="ico" style="left:254px;top:178px" width="16" height="16" viewBox="0 0 16 16"><path d="M5 2 L8 0.5 L14.5 1.5 V14 L11 15.5 L5 14.5 Z" fill="url(#srv)" stroke="#6a64b0" stroke-width="0.8"/><path d="M11 2.5 V15.5" stroke="#5a54a0" stroke-width="0.6"/><circle cx="13" cy="9.5" r="0.8" fill="#f0c020"/><path d="M0.5 10.5 L4.5 7 V9 H9.5 V12 H4.5 V14 Z" fill="#ffbaba" stroke="#c00010" stroke-width="1.1" stroke-linejoin="round"/></svg>
<div class="tn" style="left:286px;top:178px;font-size:11px;color:#333">Xuất khẩu</div>
<div class="a" style="left:250px;top:203px;width:155px;height:24px;border:1px solid #8f8f8f;border-radius:3px;background:linear-gradient(#eeeeee,#dedede);box-shadow:inset 0 0 0 1px #a9c6f2"></div>
<svg class="ico" style="left:255px;top:207px" width="15" height="16" viewBox="0 0 15 16"><rect x="1.5" y="1" width="10" height="14" fill="url(#note)" stroke="#3a94e2" stroke-width="1.2"/><path d="M0 5 H3 M0 8 H3 M0 11 H3" stroke="#333" stroke-width="0.8"/><path d="M4.5 4 H9 M5 6.5 H8 M5 9 H7" stroke="#5aa0e8" stroke-width="0.9"/><path d="M5.5 13 L12.8 5.2 L14.5 6.8 L7.2 14.6 Z" fill="#eec33c" stroke="#b98a12" stroke-width="0.7"/><path d="M5.5 13 L4.8 15.4 L7.2 14.6 Z" fill="#222"/><path d="M11 13 Q12 14 11.5 15.5" stroke="#d00000" stroke-width="1.2" fill="none"/></svg>
<div class="tn" style="left:286px;top:208px;font-size:11px;color:#111">Cập nhật ảnh hàng loạt</div>
<div class="a" style="left:242px;top:116px;width:95px;height:34px;border:3px solid #e8423f;z-index:20"></div>
<div class="a" style="left:245px;top:199px;width:166px;height:32px;border:3px solid #e8423f;z-index:20"></div>
<svg class="ico" style="left:313px;top:220px;z-index:30" width="24" height="32" viewBox="0 0 24 32"><path d="M7.2 3.5 Q9 1.6 10.8 3.5 V10.2 Q12.5 8.6 14.3 10.2 Q16 9.2 17.8 11.2 Q20.2 10.6 21.8 13.2 V20 Q21.8 25 19 29.5 H8.8 Q6.5 26.5 4.8 23.5 L2.2 18.2 Q1 15.2 3 14.2 Q5 13.6 7.2 16.8 Z" fill="#ffffff" stroke="#2b3040" stroke-width="1.5" stroke-linejoin="round"/><path d="M10.8 10.2 V15.5 M14.3 10.2 V15.5 M17.8 11.2 V15.5" stroke="#2b3040" stroke-width="1.1"/><path d="M10 24.5 Q14.5 27 19.5 24.5 V28.2 H10 Z" fill="#e6e6e6"/></svg>
<!--/MENU-->
<!--RIGHT-->
<div class="a" style="left:1006px;top:78px;width:33px;height:702px;background:linear-gradient(90deg,#c8c8c8 0,#c8c8c8 2px,#fdfdfd 3px,#f2f2f2 12px,#e2e2e2 30px,#cfcfcf 31px,#bdbdbd 33px)"></div>
<div class="a" style="left:1015px;top:84px;width:15px;height:15px;border:1px solid #9fc0ea;border-radius:3px;background:linear-gradient(#f4f9ff,#d6e8fb)"></div>
<svg class="ico" style="left:1017px;top:87px" width="11" height="9" viewBox="0 0 11 9"><path d="M5 1 L1.5 4.5 L5 8 M9.5 1 L6 4.5 L9.5 8" fill="none" stroke="#3a6fb8" stroke-width="1.3"/></svg>
<div class="a" style="left:1030px;top:102px;transform-origin:0 0;transform:rotate(90deg);font-size:12px;font-weight:bold;color:#111;line-height:16px">Khai báo thông tin ban đầu</div>
<!--/RIGHT-->
</body></html>
